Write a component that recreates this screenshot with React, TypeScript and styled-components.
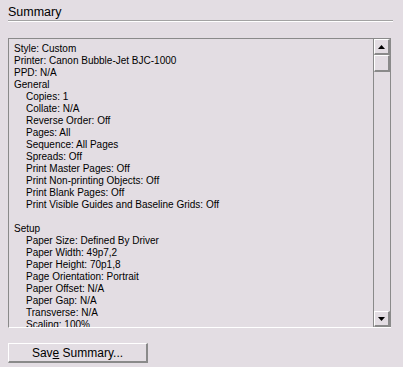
import React from 'react';
import styled, { createGlobalStyle } from 'styled-components';

const GlobalStyle = createGlobalStyle`
  html, body {
    margin: 0;
    padding: 0;
    background: #e3dde3;
  }
  body {
    font-family: "Liberation Sans", Arial, sans-serif;
    color: #000;
  }
`;

type Line = { text: string; indent?: boolean };

const lines: Line[] = [
  { text: 'Style: Custom' },
  { text: 'Printer: Canon Bubble-Jet BJC-1000' },
  { text: 'PPD: N/A' },
  { text: 'General' },
  { text: 'Copies: 1', indent: true },
  { text: 'Collate: N/A', indent: true },
  { text: 'Reverse Order: Off', indent: true },
  { text: 'Pages: All', indent: true },
  { text: 'Sequence: All Pages', indent: true },
  { text: 'Spreads: Off', indent: true },
  { text: 'Print Master Pages: Off', indent: true },
  { text: 'Print Non-printing Objects: Off', indent: true },
  { text: 'Print Blank Pages: Off', indent: true },
  { text: 'Print Visible Guides and Baseline Grids: Off', indent: true },
  { text: '' },
  { text: 'Setup' },
  { text: 'Paper Size: Defined By Driver', indent: true },
  { text: 'Paper Width: 49p7,2', indent: true },
  { text: 'Paper Height: 70p1,8', indent: true },
  { text: 'Page Orientation: Portrait', indent: true },
  { text: 'Paper Offset: N/A', indent: true },
  { text: 'Paper Gap: N/A', indent: true },
  { text: 'Transverse: N/A', indent: true },
  { text: 'Scaling: 100%', indent: true },
];

const App = () => {
  return (
    <>
      <GlobalStyle />
      <Page>
        <Title>Summary</Title>
        <Separator />
        <Panel>
          <TextArea>
            {lines.map((l, i) => (
              <Row key={i} indent={l.indent}>
                {l.text || '\u00a0'}
              </Row>
            ))}
          </TextArea>
          <ScrollBar>
            <ArrowButton>
              <svg width="7" height="4" viewBox="0 0 7 4">
                <polygon points="3.5,0 7,4 0,4" fill="#000" />
              </svg>
            </ArrowButton>
            <Thumb />
            <Track />
            <ArrowButton>
              <svg width="7" height="4" viewBox="0 0 7 4">
                <polygon points="0,0 7,0 3.5,4" fill="#000" />
              </svg>
            </ArrowButton>
          </ScrollBar>
        </Panel>
        <SaveButton>
          Sav<u>e</u> Summary...
        </SaveButton>
      </Page>
    </>
  );
};

export default App;

const Page = styled.div`
  width: 403px;
  height: 367px;
  box-sizing: border-box;
  padding: 5px 10px 0 8px;
  display: flex;
  flex-direction: column;
  overflow: hidden;
`;

const Title = styled.div`
  font-size: 12.5px;
  line-height: 14px;
  height: 15px;
`;

const Separator = styled.div`
  height: 0;
  border-top: 1px solid #a3a3a3;
  border-bottom: 1px solid #ffffff;
`;

const Panel = styled.div`
  margin-top: 16px;
  height: 290px;
  box-sizing: border-box;
  margin-right: 2px;
  border-top: 1px solid #8a8a8a;
  border-left: 1px solid #8a8a8a;
  border-bottom: 1px solid #ffffff;
  display: flex;
`;

const TextArea = styled.div`
  flex: 1;
  overflow: hidden;
  padding: 4px 0 0 5px;
`;

const Row = styled.div<{ indent?: boolean }>`
  font-size: 10px;
  line-height: 12px;
  height: 12px;
  white-space: nowrap;
  padding-left: ${p => (p.indent ? '12px' : '0')};
`;

const ScrollBar = styled.div`
  width: 16px;
  display: flex;
  flex-direction: column;
  border-left: 1px solid #8a8a8a;
  border-right: 1px solid #8a8a8a;
`;

const ArrowButton = styled.div`
  height: 16px;
  box-sizing: border-box;
  background: #e3dde3;
  border-top: 1px solid #ffffff;
  border-left: 1px solid #ffffff;
  border-right: 2px solid #8a8a8a;
  border-bottom: 2px solid #8a8a8a;
  display: flex;
  align-items: center;
  justify-content: center;
`;

const Thumb = styled.div`
  height: 17px;
  box-sizing: border-box;
  background: #e3dde3;
  border-top: 1px solid #ffffff;
  border-left: 1px solid #ffffff;
  border-right: 2px solid #8a8a8a;
  border-bottom: 2px solid #8a8a8a;
`;

const Track = styled.div`
  flex: 1;
  background: #e3dde3;
`;

const SaveButton = styled.button`
  margin-top: 15px;
  width: 140px;
  height: 20px;
  box-sizing: border-box;
  padding: 0;
  background: #e3dde3;
  font-family: "Liberation Sans", Arial, sans-serif;
  font-size: 12px;
  color: #000;
  border-top: 1px solid #ffffff;
  border-left: 1px solid #ffffff;
  border-right: 2px solid #8a8a8a;
  border-bottom: 2px solid #8a8a8a;
  text-align: center;
  line-height: 16px;
`;
